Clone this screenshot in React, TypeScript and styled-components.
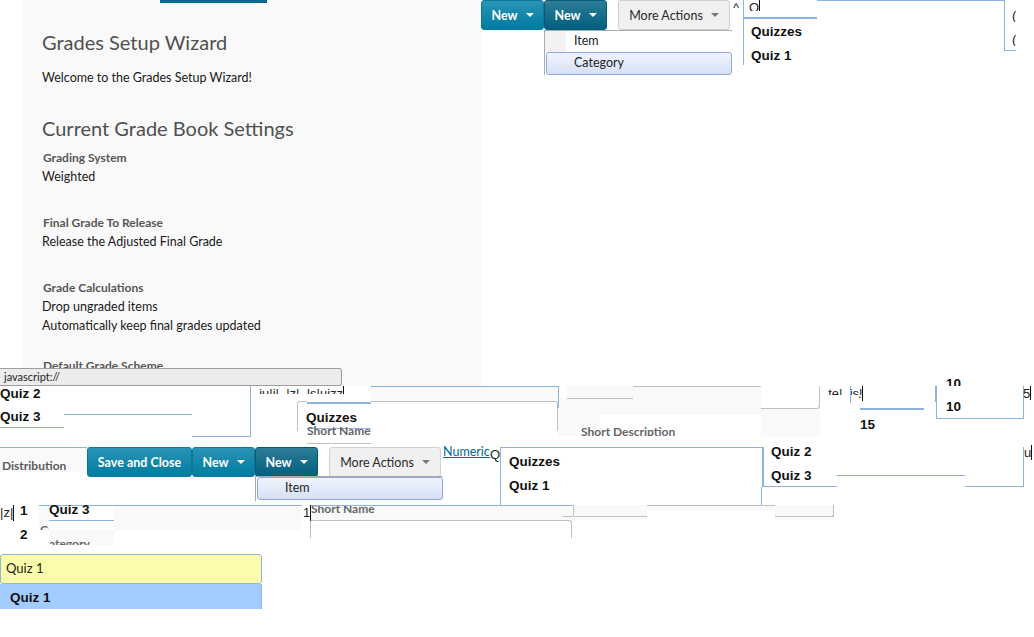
import React from "react";
import styled, { createGlobalStyle } from "styled-components";

const Global = createGlobalStyle`
  html, body { margin: 0; padding: 0; background: #fff; }
  #root { width: 1034px; height: 637px; overflow: hidden; }
`;

const BLUE = "#8db3e0";
const GREY = "#c0c0c0";
const PANEL = "#f9f9f9";
const UI = `"Lato", "Open Sans", sans-serif`;
const BOLD = `"Liberation Sans", Arial, sans-serif`;

type At = { $x: number; $y: number };

const Canvas = styled.div`
  position: relative;
  width: 1034px;
  height: 637px;
  overflow: hidden;
  background: #fff;
  font-family: ${UI};
`;

/* ---- settings panel ---- */
const WizardPanel = styled.section`
  position: absolute;
  left: 22px;
  top: 0;
  width: 459px;
  height: 386px;
  overflow: hidden;
  background: ${PANEL};
  padding: 0 20px;
  box-sizing: border-box;
`;
const TealTab = styled.div`
  width: 107px;
  height: 3px;
  margin-left: 118px;
  background: #006b8f;
`;
const Heading = styled.h2<{ $top: number }>`
  margin: ${(p) => p.$top}px 0 0;
  font-size: 20px;
  line-height: 26px;
  font-weight: 400;
  color: #505050;
`;
const Body = styled.p<{ $top: number }>`
  margin: ${(p) => p.$top}px 0 0;
  font-size: 12.5px;
  line-height: 19px;
  color: #1a1a1a;
`;
const Label = styled.h3<{ $top: number }>`
  margin: ${(p) => p.$top}px 0 0 1px;
  font-size: 12px;
  line-height: 19px;
  font-weight: 700;
  color: #565656;
`;

/* ---- toolbars ---- */
const ButtonBar = styled.div<At>`
  position: absolute;
  left: ${(p) => p.$x}px;
  top: ${(p) => p.$y}px;
  display: flex;
  height: 30px;
`;
const Primary = styled.div<{ $w: number; $dark?: boolean }>`
  width: ${(p) => p.$w}px;
  height: 30px;
  box-sizing: border-box;
  display: flex;
  align-items: center;
  justify-content: center;
  gap: 8px;
  border-radius: 3px;
  border: 1px solid ${(p) => (p.$dark ? "#0a5a75" : "#0a7a9c")};
  background: ${(p) =>
    p.$dark
      ? "linear-gradient(#2d7d96, #025f7f)"
      : "linear-gradient(#2a94b6, #007ba1)"};
  color: #fff;
  font-size: 12.5px;
  font-weight: 700;
`;
const Secondary = styled.div`
  width: 112px;
  height: 30px;
  margin-left: 11px;
  box-sizing: border-box;
  display: flex;
  align-items: center;
  justify-content: center;
  gap: 8px;
  border-radius: 3px;
  border: 1px solid #cfcfcf;
  background: #f0f0f0;
  color: #2a2a2a;
  font-size: 12.5px;
`;
const Caret = styled.span<{ $c: string }>`
  width: 0;
  height: 0;
  border-left: 4px solid transparent;
  border-right: 4px solid transparent;
  border-top: 4px solid ${(p) => p.$c};
`;
const Menu = styled.div<At & { $w: number; $h: number }>`
  position: absolute;
  left: ${(p) => p.$x}px;
  top: ${(p) => p.$y}px;
  width: ${(p) => p.$w}px;
  height: ${(p) => p.$h}px;
  box-sizing: border-box;
  border-top: 1px solid #aaa;
  border-left: 1px solid #aaa;
  background: #fff;
`;
const MenuItem = styled.div`
  height: 21px;
  padding-left: 29px;
  font-size: 12.5px;
  line-height: 20px;
  color: #222;
  background: linear-gradient(to right, #f3f1f3 21px, #fff 21px);
`;
const MenuItemActive = styled.div`
  height: 23px;
  margin-left: 1px;
  padding-left: 27px;
  box-sizing: border-box;
  border: 1px solid #8ea8dc;
  border-radius: 3px;
  font-size: 12.5px;
  line-height: 19px;
  color: #222;
  background: linear-gradient(#f0f4fd, #d6e0f5);
`;

/* ---- canvas fragments ---- */
const Patch = styled.div<At & { $w: number; $h: number; $bg?: string }>`
  position: absolute;
  left: ${(p) => p.$x}px;
  top: ${(p) => p.$y}px;
  width: ${(p) => p.$w}px;
  height: ${(p) => p.$h}px;
  background: ${(p) => p.$bg ?? PANEL};
`;
const HLine = styled.div<At & { $w: number; $c?: string; $t?: number }>`
  position: absolute;
  left: ${(p) => p.$x}px;
  top: ${(p) => p.$y}px;
  width: ${(p) => p.$w}px;
  height: ${(p) => p.$t ?? 1}px;
  background: ${(p) => p.$c ?? BLUE};
`;
const VLine = styled.div<At & { $h: number; $c?: string; $t?: number }>`
  position: absolute;
  left: ${(p) => p.$x}px;
  top: ${(p) => p.$y}px;
  height: ${(p) => p.$h}px;
  width: ${(p) => p.$t ?? 1}px;
  background: ${(p) => p.$c ?? BLUE};
`;
const Bold = styled.div<At & { $clip?: number }>`
  position: absolute;
  left: ${(p) => p.$x}px;
  top: ${(p) => p.$y}px;
  font: 700 13.5px/16px ${BOLD};
  color: #111;
  white-space: nowrap;
  ${(p) => (p.$clip != null ? `height:${p.$clip}px;overflow:hidden;` : "")}
`;
const GreyLabel = styled.div<At & { $clip: number; $offset?: number }>`
  position: absolute;
  left: ${(p) => p.$x}px;
  top: ${(p) => p.$y}px;
  height: ${(p) => p.$clip}px;
  overflow: hidden;
  font: 700 12px/16px ${UI};
  color: #666;
  white-space: nowrap;
  & > span {
    display: block;
    margin-top: ${(p) => p.$offset ?? 0}px;
  }
`;
const TypedText = styled.div<At & { $clip?: number; $caret?: boolean; $offset?: number }>`
  position: absolute;
  left: ${(p) => p.$x}px;
  top: ${(p) => p.$y}px;
  height: ${(p) => p.$clip ?? 14}px;
  overflow: hidden;
  font: 400 13px/16px ${BOLD};
  color: #222;
  white-space: nowrap;
  & > span {
    display: inline-block;
    margin-top: ${(p) => p.$offset ?? 0}px;
    ${(p) => (p.$caret ? "border-right: 1px solid #111;" : "")}
  }
`;
const StatusBar = styled.div`
  position: absolute;
  left: 0;
  top: 368px;
  width: 342px;
  height: 18px;
  box-sizing: border-box;
  border: 1px solid #9e9e9e;
  border-left: 0;
  border-radius: 0 3px 3px 0;
  background: #ececec;
  padding-left: 4px;
  font: 400 11px/16px ${UI};
  color: #222;
`;
const NumericLink = styled.a`
  position: absolute;
  left: 443px;
  top: 444px;
  font-size: 12.5px;
  line-height: 16px;
  color: #006b8f;
  text-decoration: underline;
`;
const DistributionLabel = styled.div`
  position: absolute;
  left: 2px;
  top: 458px;
  font-size: 12px;
  line-height: 16px;
  font-weight: 700;
  color: #5c5c5c;
`;
const CornerBox = styled.div<At & { $w: number; $h: number }>`
  position: absolute;
  left: ${(p) => p.$x}px;
  top: ${(p) => p.$y}px;
  width: ${(p) => p.$w}px;
  height: ${(p) => p.$h}px;
  box-sizing: border-box;
  border: 1px solid ${GREY};
  border-bottom: 0;
  border-radius: 3px 3px 0 0;
  background: #fff;
`;
const EndCorner = styled.div<At & { $w: number; $h: number }>`
  position: absolute;
  left: ${(p) => p.$x}px;
  top: ${(p) => p.$y}px;
  width: ${(p) => p.$w}px;
  height: ${(p) => p.$h}px;
  box-sizing: border-box;
  border: 1px solid ${GREY};
  border-width: 0 1px 1px 0;
  border-radius: 0 0 3px 0;
`;
const YellowInput = styled.div`
  position: absolute;
  left: 0;
  top: 554px;
  width: 262px;
  height: 30px;
  box-sizing: border-box;
  border: 1px solid #88bcd0;
  border-radius: 3px;
  background: #fbfdab;
  padding-left: 5px;
  font-size: 13px;
  line-height: 27px;
  color: #222;
`;
const Highlight = styled.div`
  position: absolute;
  left: 0;
  top: 584px;
  width: 262px;
  height: 25px;
  box-sizing: border-box;
  background: #a3ccfe;
  border-right: 1px solid #8db3e0;
  padding-left: 10px;
  font: 700 13.5px/28px ${BOLD};
  color: #111;
`;

const NewButton = ({ dark }: { dark?: boolean }) => (
  <Primary $w={63} $dark={dark}>
    New <Caret $c="#fff" />
  </Primary>
);
const MoreActions = () => (
  <Secondary>
    More Actions <Caret $c="#777" />
  </Secondary>
);

export default function App() {
  return (
    <Canvas>
      <Global />

      <WizardPanel>
        <TealTab />
        <Heading $top={26}>Grades Setup Wizard</Heading>
        <Body $top={13}>Welcome to the Grades Setup Wizard!</Body>
        <Heading $top={28}>Current Grade Book Settings</Heading>
        <Label $top={7}>Grading System</Label>
        <Body $top={0}>Weighted</Body>
        <Label $top={27}>Final Grade To Release</Label>
        <Body $top={0}>Release the Adjusted Final Grade</Body>
        <Label $top={27}>Grade Calculations</Label>
        <Body $top={0}>Drop ungraded items</Body>
        <Body $top={0}>Automatically keep final grades updated</Body>
        <Label $top={21}>Default Grade Scheme</Label>
      </WizardPanel>

      {/* top toolbar */}
      <ButtonBar $x={481} $y={0}>
        <NewButton />
        <NewButton dark />
        <MoreActions />
      </ButtonBar>
      <Menu $x={544} $y={30} $w={188} $h={45}>
        <MenuItem>Item</MenuItem>
        <MenuItemActive>Category</MenuItemActive>
      </Menu>

      {/* top right picker */}
      <TypedText $x={733} $y={0} $clip={8} $offset={-8}><span>^</span></TypedText>
      <TypedText $x={749} $y={0} $clip={11} $offset={-5} $caret><span>Q</span></TypedText>
      <VLine $x={743} $y={0} $h={65} />
      <HLine $x={743} $y={17} $w={74} $t={2} />
      <Bold $x={751} $y={24}>Quizzes</Bold>
      <Bold $x={751} $y={48}>Quiz 1</Bold>
      <HLine $x={817} $y={0} $w={188} />
      <VLine $x={1004} $y={0} $h={50} />
      <HLine $x={1004} $y={50} $w={12} />
      <TypedText $x={1012} $y={32} $clip={14}><span>(</span></TypedText>
      <TypedText $x={1012} $y={8} $clip={14}><span>(</span></TypedText>

      {/* mid row fragments */}
      <Patch $x={567} $y={386} $w={194} $h={29} />
      <HLine $x={633} $y={386} $w={128} $c={GREY} />
      <Patch $x={761} $y={408} $w={59} $h={29} />
      <EndCorner $x={761} $y={386} $w={59} $h={23} />
      <Patch $x={558} $y={398} $w={74} $h={38} />
      <HLine $x={567} $y={398} $w={66} $c={GREY} />
      <Patch $x={600} $y={415} $w={161} $h={22} $bg="#fff" />
      <GreyLabel $x={581} $y={424} $clip={13} $offset={0}><span>Short Description</span></GreyLabel>
      <Patch $x={371} $y={387} $w={187} $h={15} />
      <HLine $x={371} $y={386} $w={188} />
      <CornerBox $x={297} $y={401} $w={261} $h={30} />
      <VLine $x={558} $y={386} $h={22} />
      <Patch $x={559} $y={436} $w={200} $h={1} $bg="#fff" />

      <StatusBar>javascript://</StatusBar>

      <Patch $x={307} $y={386} $w={64} $h={57} $bg="#fff" />
      <HLine $x={307} $y={402} $w={64} $t={2} />
      <Bold $x={306} $y={410}>Quizzes</Bold>
      <HLine $x={307} $y={428} $w={64} />
      <GreyLabel $x={307} $y={423} $clip={14} $offset={0}><span>Short Name</span></GreyLabel>
      <HLine $x={307} $y={443} $w={64} $c={GREY} />
      <TypedText $x={252} $y={386} $clip={8} $offset={-7} $caret><span>..iu|i|_|z|_|s|uizz</span></TypedText>

      <Bold $x={0} $y={386}>Quiz 2</Bold>
      <Bold $x={0} $y={409}>Quiz 3</Bold>
      <HLine $x={64} $y={414} $w={128} />
      <HLine $x={0} $y={427} $w={64} />
      <HLine $x={192} $y={436} $w={59} />
      <VLine $x={250} $y={386} $h={51} />

      <TypedText $x={821} $y={386} $clip={9} $offset={-7}><span>_te|_is|</span></TypedText>
      <VLine $x={850} $y={386} $h={17} />
      <TypedText $x={858} $y={386} $clip={15} $offset={-2} $caret><span>.</span></TypedText>
      <HLine $x={860} $y={408} $w={64} $t={2} />
      <Bold $x={860} $y={417} $clip={13}>15</Bold>
      <VLine $x={936} $y={386} $h={33} />
      <VLine $x={935} $y={386} $h={16} $t={2} />
      <HLine $x={936} $y={418} $w={88} />
      <VLine $x={1023} $y={386} $h={33} />
      <Bold $x={946} $y={376} $clip={10}>10</Bold>
      <Bold $x={946} $y={399}>10</Bold>
      <TypedText $x={1023} $y={386} $clip={14} $offset={-1} $caret><span>5</span></TypedText>

      {/* second toolbar */}
      <Patch $x={0} $y={447} $w={87} $h={25} />
      <HLine $x={0} $y={447} $w={87} />
      <DistributionLabel>Distribution</DistributionLabel>
      <ButtonBar $x={87} $y={447}>
        <Primary $w={105}>Save and Close</Primary>
        <NewButton />
        <NewButton dark />
        <MoreActions />
      </ButtonBar>
      <Menu $x={255} $y={476} $w={188} $h={25}>
        <MenuItemActive>Item</MenuItemActive>
      </Menu>
      <NumericLink>Numeric</NumericLink>
      <TypedText $x={490} $y={447} $clip={16} $caret><span>Q</span></TypedText>

      {/* second picker */}
      <HLine $x={500} $y={447} $w={262} />
      <VLine $x={500} $y={447} $h={58} />
      <Bold $x={509} $y={454}>Quizzes</Bold>
      <Bold $x={509} $y={478}>Quiz 1</Bold>
      <Bold $x={509} $y={502} $clip={3}>Quiz 2</Bold>
      <VLine $x={762} $y={447} $h={40} $t={2} />
      <VLine $x={761} $y={487} $h={18} />
      <Bold $x={771} $y={444}>Quiz 2</Bold>
      <Bold $x={771} $y={468}>Quiz 3</Bold>
      <HLine $x={762} $y={486} $w={75} />
      <HLine $x={837} $y={475} $w={128} />
      <HLine $x={965} $y={486} $w={59} />
      <VLine $x={1023} $y={447} $h={40} />
      <TypedText $x={1024} $y={445} $clip={15} $caret><span>u</span></TypedText>

      {/* short-name card */}
      <Patch $x={39} $y={506} $w={262} $h={24} />
      <HLine $x={39} $y={505} $w={263} />
      <Patch $x={311} $y={506} $w={261} $h={15} />
      <CornerBox $x={310} $y={520} $w={262} $h={18} />
      <GreyLabel $x={311} $y={506} $clip={10} $offset={-5}><span>Short Name</span></GreyLabel>
      <HLine $x={310} $y={505} $w={263} />
      <VLine $x={573} $y={505} $h={8} $c={GREY} />
      <EndCorner $x={562} $y={505} $w={12} $h={12} />
      <Patch $x={574} $y={505} $w={73} $h={15} />
      <HLine $x={574} $y={516} $w={73} $c={GREY} />
      <Patch $x={647} $y={505} $w={128} $h={5} />
      <HLine $x={647} $y={505} $w={128} $c={GREY} />
      <Patch $x={775} $y={505} $w={59} $h={15} />
      <HLine $x={775} $y={516} $w={59} $c={GREY} />
      <EndCorner $x={822} $y={505} $w={12} $h={12} />

      <TypedText $x={303} $y={505} $clip={16} $caret><span>1</span></TypedText>
      <TypedText $x={0} $y={505} $clip={16} $caret><span>|z|</span></TypedText>
      <Bold $x={20} $y={503}>1</Bold>
      <Bold $x={20} $y={527}>2</Bold>
      <Bold $x={20} $y={551} $clip={3}>3</Bold>

      <GreyLabel $x={40} $y={522} $clip={8}><span>Category</span></GreyLabel>
      <Patch $x={49} $y={506} $w={65} $h={39} $bg="#fff" />
      <Patch $x={49} $y={530} $w={65} $h={15} />
      <Bold $x={49} $y={502}>Quiz 3</Bold>
      <HLine $x={49} $y={520} $w={65} />
      <GreyLabel $x={49} $y={536} $clip={9} $offset={0}><span>ategory</span></GreyLabel>

      {/* autocomplete */}
      <YellowInput>Quiz 1</YellowInput>
      <Highlight>Quiz 1</Highlight>
    </Canvas>
  );
}
